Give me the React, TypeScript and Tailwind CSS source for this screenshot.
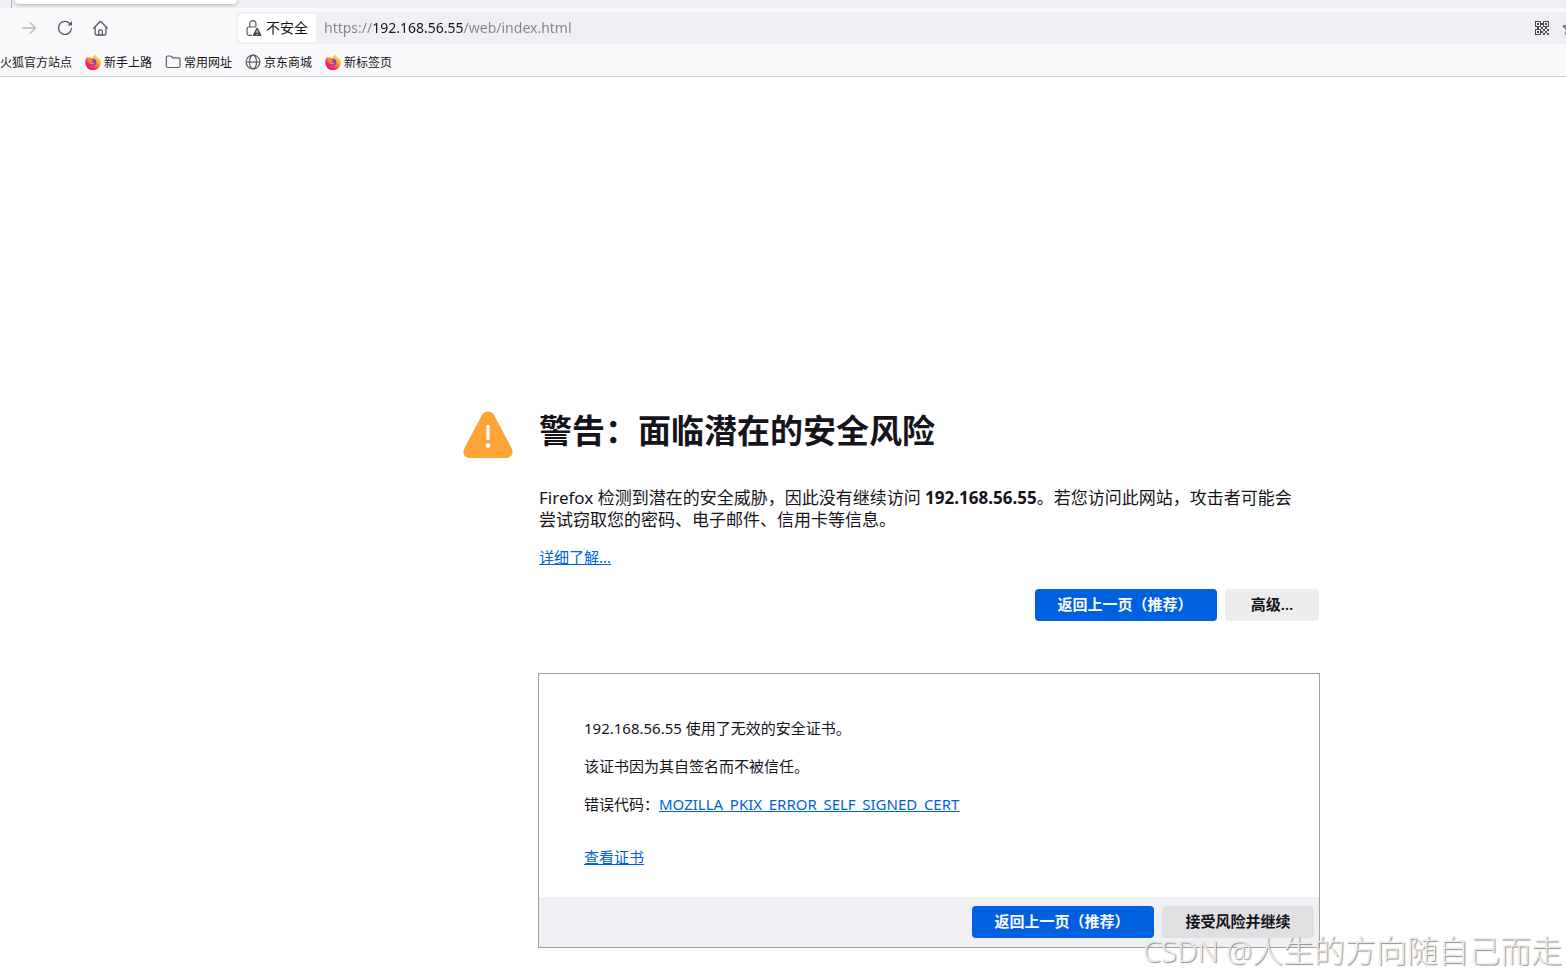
import { useState } from 'react';

const FirefoxIcon = () => (
  <svg viewBox="0 0 16 16" className="size-4 shrink-0" aria-hidden="true">
    <defs>
      <linearGradient id="fox" x1="0.85" y1="0.1" x2="0.2" y2="0.95">
        <stop offset="0" stopColor="#fff44f" />
        <stop offset="0.35" stopColor="#ff9a2e" />
        <stop offset="0.7" stopColor="#ff3750" />
        <stop offset="1" stopColor="#eb0878" />
      </linearGradient>
    </defs>
    <path
      d="M15.4 6.2c-.4-.9-1.1-1.8-1.7-2.1.5.9.7 1.7.8 2.4C13.6 4.2 12 3.400 10.700 1.700 10.300 1.100 10.300.7 10.400.2 8.900 1 8 2.500 7.800 3.700c-.8 0-1.500.2-2.200.6-.5-.4-.7-1-.6-1.600-1 .4-1.600 1.100-2 1.600-.3-.4-.3-1.400-.3-1.800C1.300 3.600.2 5.700.2 8.200a7.700 7.700 0 0 0 15.500.6c.2-.9 0-1.800-.3-2.600z"
      fill="url(#fox)"
    />
    <circle cx="8" cy="8.300" r="3.400" fill="#7542e5" />
    <path
      d="M2.700 5.100c1-.6 2.300-.4 3 .1.900.1 1.700.1 2.500.5-.1.800-1.500 1-1.700 1.700.3 1.300 2.200 1.900 3.500.8-.5 2.300-3.600 2.900-5.300 1.300C3.400 8.600 3.200 6.500 2.700 5.100z"
      fill="#ff8a2b"
    />
    <path
      d="M8 3.800c2.800.2 4.200 2.200 3.800 4.600 1-.9 1-2.500.4-3.500 1.600 1.500 1.700 4.200.5 6 1.500-1 2.100-3 1.600-5.100C13.300 4 11.500 3 10.600 1.400 9.300 1.800 8.300 2.700 8 3.800z"
      fill="#ffc43a"
    />
  </svg>
);

const FolderIcon = () => (
  <svg viewBox="0 0 16 16" className="size-4 shrink-0" fill="none" stroke="#5b5b66" strokeWidth="1.2" aria-hidden="true">
    <path d="M1.300 12V3.500c0-.9.7-1.500 1.500-1.500h2.700c.4 0 .8.200 1.100.5l1.200 1.300h5.600c.9 0 1.600.7 1.600 1.500V12c0 .9-.7 1.500-1.600 1.500H2.800c-.8 0-1.500-.6-1.500-1.500z" />
  </svg>
);

const GlobeIcon = () => (
  <svg viewBox="0 0 16 16" className="size-4 shrink-0" fill="none" stroke="#5b5b66" strokeWidth="1.2" aria-hidden="true">
    <circle cx="8" cy="8" r="6.900" />
    <ellipse cx="8" cy="8" rx="3.500" ry="6.900" />
    <path d="M1 8h14" />
  </svg>
);

const ForwardIcon = () => (
  <svg viewBox="0 0 16 16" className="size-4" fill="none" stroke="#b9b9be" strokeWidth="1.3" strokeLinecap="round" strokeLinejoin="round">
    <path d="M1.500 8h13M9 2.500 14.500 8 9 13.500" />
  </svg>
);

const ReloadIcon = () => (
  <svg viewBox="0 0 16 16" className="size-4" fill="none" stroke="#5b5b66" strokeWidth="1.3" strokeLinecap="round">
    <path d="M14.400 8.500a6.500 6.500 0 1 1-2-5.300" />
    <path d="M15 1v4.600h-4.600z" fill="#5b5b66" stroke="none" />
  </svg>
);

const HomeIcon = () => (
  <svg viewBox="0 0 16 16" className="size-4" fill="none" stroke="#5b5b66" strokeWidth="1.3" strokeLinecap="round" strokeLinejoin="round">
    <path d="M.8 8.200 6.800 1.700a1 1 0 0 1 1.400 0L14.200 8.200" />
    <path d="M2.100 7v6.600c0 .8.600 1.400 1.400 1.400h8c.8 0 1.400-.6 1.400-1.400V7" />
    <path d="M5.700 15v-4.200c0-.6.400-1 1-1h1.600c.6 0 1 .4 1 1V15" />
  </svg>
);

const LockWarningIcon = () => (
  <svg viewBox="0 0 16 16" className="size-4" aria-hidden="true">
    <path
      d="M3.700 7V3.800a3.100 3.100 0 0 1 6.200 0V7M6 15.300H2.800c-1 0-1.700-.7-1.700-1.600V8.600C1.100 7.700 1.800 7 2.800 7h7"
      fill="none"
      stroke="#5b5b66"
      strokeWidth="1.2"
    />
    <path d="M10.400 8.100c.3-.6 1.100-.6 1.400 0l3.600 6.800c.3.5-.1 1.100-.7 1.100H7.500c-.6 0-1-.6-.7-1.100z" fill="#4a4a55" />
    <path d="M11.100 10.200v2.700M11.100 14v1" stroke="#fff" strokeWidth="1" />
  </svg>
);

const QrIcon = () => (
  <svg viewBox="0 0 14 14" className="size-[14px]" fill="#4a4a55" shapeRendering="crispEdges">
    <path
      fillRule="evenodd"
      d="M0 0h6v6H0zM1 1v4h4V1zM8 0h6v6H8zM9 1v4h4V1zM0 8h6v6H0zM1 9v4h4V9z"
    />
    <path d="M2 2h2v2H2zM10 2h2v2h-2zM2 10h2v2H2zM6 2h2v2H6zM2 6h2v2H2zM6 6h2v2H6zM10 6h2v2h-2zM8 8h2v2H8zM12 8h2v2h-2zM6 10h2v2H6zM10 10h2v2h-2zM8 12h2v2H8zM12 12h2v2h-2z" />
  </svg>
);

const StarIcon = () => (
  <svg viewBox="0 0 16 16" className="size-4" fill="none" stroke="#5b5b66" strokeWidth="1.3" strokeLinejoin="round">
    <path d="m8 1 2.100 4.500 4.900.6-3.600 3.400.9 4.900L8 12l-4.300 2.400.9-4.900L1 6.100l4.900-.6z" />
  </svg>
);

const WarningIcon = () => (
  <svg viewBox="0 0 50 48" className="h-12 w-[50px]" role="img" aria-label="警告">
    <path
      d="M18.800 4.200C21.500-.8 28.500-.8 31.200 4.200l17.600 33.200C51 41.800 48.500 47 43.500 47h-37C1.500 47-1 41.800 1.200 37.400z"
      fill="#ffa436"
    />
    <path d="M25 15.500v12" stroke="#fff5ea" strokeWidth="3.6" strokeLinecap="round" />
    <circle cx="25" cy="34.500" r="2.400" fill="#fff5ea" />
  </svg>
);

const bookmarks = [
  { label: '火狐官方站点', icon: null },
  { label: '新手上路', icon: <FirefoxIcon /> },
  { label: '常用网址', icon: <FolderIcon /> },
  { label: '京东商城', icon: <GlobeIcon /> },
  { label: '新标签页', icon: <FirefoxIcon /> },
];

const BrowserChrome = () => {
  const [url, setUrl] = useState('https://192.168.56.55/web/index.html');

  return (
    <header className="overflow-hidden border-b border-[#cccccf] bg-[#f9f9fb]">
      <div className="flex h-2 overflow-hidden bg-[#f0f0f4]">
        <div className="ml-[11px] h-2 w-px bg-[#b4b4bb]" />
        <div className="ml-[3px] h-1 w-[222px] rounded-b bg-white shadow-[0_0_4px_rgba(0,0,0,0.4)]" />
      </div>
      <div className="flex h-10 items-center">
        <nav className="flex w-[236px] shrink-0 gap-5 pl-[21px]">
          <button disabled aria-label="前进">
            <ForwardIcon />
          </button>
          <button aria-label="刷新">
            <ReloadIcon />
          </button>
          <button aria-label="主页">
            <HomeIcon />
          </button>
        </nav>
        <div className="flex h-8 grow items-center rounded-l bg-[#f0f0f4] pl-0.5">
          <button className="flex h-7 shrink-0 items-center gap-1 rounded bg-white px-2 text-sm text-[#15141a]">
            <LockWarningIcon />
            不安全
          </button>
          {/* the host part of the address is darker than the rest */}
          <input
            type="text"
            aria-label="地址"
            value={url}
            onChange={(e) => setUrl(e.target.value)}
            className="ml-2 h-7 min-w-0 grow bg-[linear-gradient(90deg,#83838a_49px,#15141a_49px,#15141a_140px,#83838a_140px)] bg-clip-text pb-0.5 text-sm text-transparent caret-black outline-none"
          />
          <button aria-label="二维码" className="shrink-0">
            <QrIcon />
          </button>
          <button aria-label="收藏" className="-mr-3 ml-[13px] shrink-0">
            <StarIcon />
          </button>
        </div>
      </div>
      <nav className="flex h-7 items-center gap-[13px] text-xs text-[#15141a]">
        {bookmarks.map((item) => (
          <a key={item.label} href="#" className="flex shrink-0 items-center gap-[3px]">
            {item.icon}
            <span className="pt-0.5">{item.label}</span>
          </a>
        ))}
      </nav>
    </header>
  );
};

const App = () => {
  return (
    <div className="relative overflow-hidden bg-white font-['Noto_Sans','Noto_Sans_CJK_SC',sans-serif] text-[15px] leading-5 text-[#15141a]">
      <BrowserChrome />
      <main className="flex justify-center pt-[332px] pb-[30px] pl-[216px]">
        <div className="flex w-full max-w-[856px] gap-[26px]">
          <div className="shrink-0 pt-0.5">
            <WarningIcon />
          </div>
          <div className="min-w-0 grow">
            <h1 className="text-[33px] leading-11 font-bold">警告：面临潜在的安全风险</h1>
            <p className="mt-[34px] pr-3 text-[17px] leading-[22px]">
              Firefox 检测到潜在的安全威胁，因此没有继续访问 <b>192.168.56.55</b>。若您访问此网站，攻击者可能会尝试窃取您的密码、电子邮件、信用卡等信息。
            </p>
            <p className="mt-4">
              <a href="#" className="text-[#0061e0] underline">
                详细了解…
              </a>
            </p>
            <div className="mt-[22px] flex justify-end gap-2">
              <button className="h-8 min-w-[182px] rounded bg-[#0061e0] pr-6 pb-0.5 pl-[22px] font-semibold text-[#fbfbfe]">
                返回上一页（推荐）
              </button>
              <button className="h-8 min-w-[94px] rounded bg-[#ededed] pb-0.5 font-semibold">高级…</button>
            </div>

            <section className="-mx-px mt-[52px] border border-[#a0a0a3]">
              <div className="flex flex-col items-start gap-[18px] px-[45px] pt-11 pb-[30px]">
                <p>192.168.56.55 使用了无效的安全证书。</p>
                <p>该证书因为其自签名而不被信任。</p>
                <p>
                  错误代码：
                  <a href="#" className="text-[#0061e0] underline">
                    MOZILLA_PKIX_ERROR_SELF_SIGNED_CERT
                  </a>
                </p>
                <a href="#" className="mt-[15px] text-[#0061e0] underline">
                  查看证书
                </a>
              </div>
              <div className="flex h-[50px] items-center justify-end gap-2 bg-[#f0f0f4] pr-[5px]">
                <button className="h-8 min-w-[182px] rounded bg-[#0061e0] pr-6 pb-0.5 pl-[22px] font-semibold text-[#fbfbfe]">
                  返回上一页（推荐）
                </button>
                <button className="h-8 min-w-[152px] rounded bg-[#e0e0e3] pb-0.5 font-semibold">接受风险并继续</button>
              </div>
            </section>
          </div>
        </div>
      </main>
      <p className="pointer-events-none absolute right-1 bottom-[7px] text-[31px] leading-10 font-light text-[#ececec] [text-shadow:1px_1px_1px_#8c8c8c]">
        <span className="text-[29px]">CSDN @</span>人生的方向随自己而走
      </p>
    </div>
  );
};

export default App;
